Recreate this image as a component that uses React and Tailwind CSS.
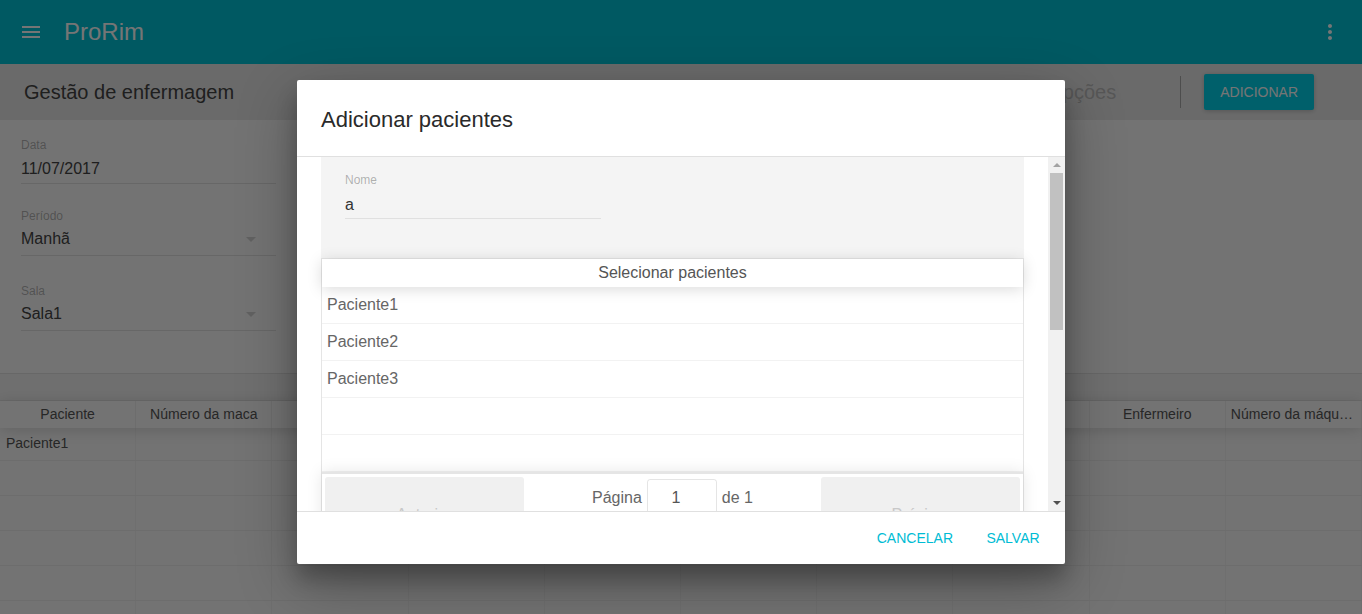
import React from "react";

const cols = [
  "Paciente",
  "Número da maca",
  "Peso inicial",
  "Peso final",
  "Pressão inicial",
  "Pressão final",
  "Observações",
  "Acesso",
  "Enfermeiro",
  "Número da máquina",
];

function Field({ label, value, select, labelTop, valueTop, pb }) {
  return (
    <div className={labelTop}>
      <div className="text-[12px] leading-[15px] text-black/30">{label}</div>
      <div
        className={`${valueTop} ${pb} relative w-[255px] border-b border-[#e0e0e0] text-[16px] leading-[20px] text-[#444]`}
      >
        {value}
        {select && (
          <span className="absolute right-[20px] top-[8px] h-0 w-0 border-x-[5px] border-t-[5px] border-x-transparent border-t-[#d4d4d4]" />
        )}
      </div>
    </div>
  );
}

export default function App() {
  const rows = [
    { h: "h-[33px]", t: "Paciente1" },
    { h: "h-[35px]", t: "" },
    { h: "h-[35px]", t: "" },
    { h: "h-[35px]", t: "" },
    { h: "h-[35px]", t: "" },
    { h: "h-[35px]", t: "" },
  ];
  return (
    <div className="relative isolate h-[614px] w-[1362px] overflow-hidden bg-[#fafafa] font-['Liberation_Sans',Arial,sans-serif]">
      {/* App bar */}
      <header className="flex h-[64px] items-center bg-[#00c2d6] text-white">
        <svg className="ml-[19px] h-[24px] w-[24px]" viewBox="0 0 24 24" fill="#ffffff">
          <path d="M3 18h18v-2H3v2zm0-5h18v-2H3v2zm0-7v2h18V6H3z" />
        </svg>
        <div className="ml-[21px] text-[24px] leading-[32px]">ProRim</div>
        <div className="flex-1" />
        <svg className="mr-[20px] h-[24px] w-[24px]" viewBox="0 0 24 24" fill="#ffffff">
          <path d="M12 8c1.1 0 2-.9 2-2s-.9-2-2-2-2 .9-2 2 .9 2 2 2zm0 2c-1.1 0-2 .9-2 2s.9 2 2 2 2-.9 2-2-.9-2-2-2zm0 6c-1.1 0-2 .9-2 2s.9 2 2 2 2-.9 2-2-.9-2-2-2z" />
        </svg>
      </header>

      {/* Sub header */}
      <div className="flex h-[56px] items-center bg-[#e8e8e8] pl-[24px]">
        <div className="text-[20px] leading-[24px] text-[#444]">Gestão de enfermagem</div>
        <div className="flex-1" />
        <div className="text-[20px] leading-[24px] text-[#bdbdbd]">Opções</div>
        <div className="ml-[64px] h-[32px] w-px bg-[#a8a8a8]" />
        <button className="ml-[23px] mr-[48px] h-[36px] rounded-[2px] bg-[#00d2ea] px-[16px] text-[14px] text-white shadow-[0_1px_5px_rgba(0,0,0,0.2)]">
          ADICIONAR
        </button>
      </div>

      {/* Form */}
      <div className="pl-[21px]">
        <Field label="Data" value="11/07/2017" labelTop="pt-[18px]" valueTop="mt-[6px]" pb="pb-[4px]" />
        <Field label="Período" value="Manhã" select labelTop="mt-[25px]" valueTop="mt-[5px]" pb="pb-[6px]" />
        <Field label="Sala" value="Sala1" select labelTop="mt-[28px]" valueTop="mt-[5px]" pb="pb-[6px]" />
      </div>

      {/* Table */}
      <div className="mt-[42px] border-t border-black/10 text-[14px] text-[#555]">
        <div className="h-[27px] border-b border-black/5 bg-black/[0.03]" />
        <div className="relative z-[1] flex h-[27px] shadow-[0_2px_15px_0_rgba(0,0,0,0.15)]">
          {cols.map((c, i) => (
            <div
              key={i}
              className="flex-1 truncate border-r border-black/5 px-[5px] text-center leading-[27px]"
            >
              {c === "Número da máquina" ? "Número da máqui…" : c}
            </div>
          ))}
        </div>
        {rows.map((r, i) => (
          <div key={i} className={`flex ${r.h} border-b border-black/5`}>
            {cols.map((c, j) => (
              <div key={j} className="flex-1 border-r border-black/[0.03] px-[6px] leading-[30px]">
                {j === 0 ? r.t : ""}
              </div>
            ))}
          </div>
        ))}
      </div>

      {/* Overlay */}
      <div className="absolute inset-0 z-10 bg-black/[0.54]" />

      {/* Dialog */}
      <div className="absolute inset-0 z-20 flex justify-center pt-[80px]">
        <div className="flex h-[484px] w-[768px] flex-col rounded-[2px] bg-white shadow-[0_19px_60px_rgba(0,0,0,0.3),0_15px_20px_rgba(0,0,0,0.22)]">
          <h3 className="px-[24px] pt-[24px] pb-[20px] text-[22px] leading-[32px] text-[#2a2a2a]">
            Adicionar pacientes
          </h3>
          <div className="flex h-[356px] border-y border-[#e0e0e0]">
            <div className="flex-1 overflow-hidden px-[24px]">
              {/* search box */}
              <div className="h-[101px] bg-[#f4f4f4] pl-[24px] pt-[16px]">
                <div className="text-[12px] leading-[15px] text-black/30">Nome</div>
                <div className="mt-[7px] w-[256px] border-b border-[#e0e0e0] pb-[3px] text-[16px] leading-[20px] text-[#333]">
                  a
                </div>
              </div>
              {/* patients table */}
              <div className="border border-black/10 text-[16px]">
                <div className="relative z-[1] h-[28px] text-center leading-[28px] text-[#555] shadow-[0_2px_15px_0_rgba(0,0,0,0.15)]">
                  Selecionar pacientes
                </div>
                {["Paciente1", "Paciente2", "Paciente3", "", ""].map((p, i) => (
                  <div
                    key={i}
                    className="h-[37px] border-b border-black/5 px-[5px] leading-[35px] text-[#666]"
                  >
                    {p}
                  </div>
                ))}
                <div className="relative z-[1] flex border-t-2 border-black/10 p-[3px] shadow-[0_0_15px_0_rgba(0,0,0,0.1)]">
                  <div className="flex h-[76px] flex-1 items-center justify-center rounded-[3px] bg-[#f0f0f0] text-[#c8c8c8]">
                    Anterior
                  </div>
                  <div className="flex flex-[1.5] items-start justify-center pt-[2px] text-[#666]">
                    <span className="leading-[38px]">Página</span>
                    <span className="ml-[5px] flex h-[38px] w-[70px] items-center justify-center rounded-[3px] border border-black/10 pr-[12px] text-[#555]">
                      1
                    </span>
                    <span className="ml-[5px] leading-[38px]">de 1</span>
                  </div>
                  <div className="flex h-[76px] flex-1 items-center justify-center rounded-[3px] bg-[#f0f0f0] text-[#c8c8c8]">
                    Próximo
                  </div>
                </div>
              </div>
            </div>
            {/* scrollbar */}
            <div className="flex w-[17px] flex-col bg-[#f1f1f1]">
              <div className="flex h-[16px] items-center justify-center">
                <span className="h-0 w-0 border-x-[4px] border-b-[4px] border-x-transparent border-b-[#a3a3a3]" />
              </div>
              <div className="mx-[2px] h-[157px] bg-[#c1c1c1]" />
              <div className="flex-1" />
              <div className="flex h-[17px] items-center justify-center">
                <span className="h-0 w-0 border-x-[4px] border-t-[4px] border-x-transparent border-t-[#505050]" />
              </div>
            </div>
          </div>
          <div className="flex h-[52px] items-center justify-end px-[8px]">
            <button className="h-[36px] min-w-[88px] px-[16px] text-[14px] text-[#00bcd4]">CANCELAR</button>
            <button className="h-[36px] min-w-[88px] px-[16px] text-[14px] text-[#00bcd4]">SALVAR</button>
          </div>
        </div>
      </div>
    </div>
  );
}
